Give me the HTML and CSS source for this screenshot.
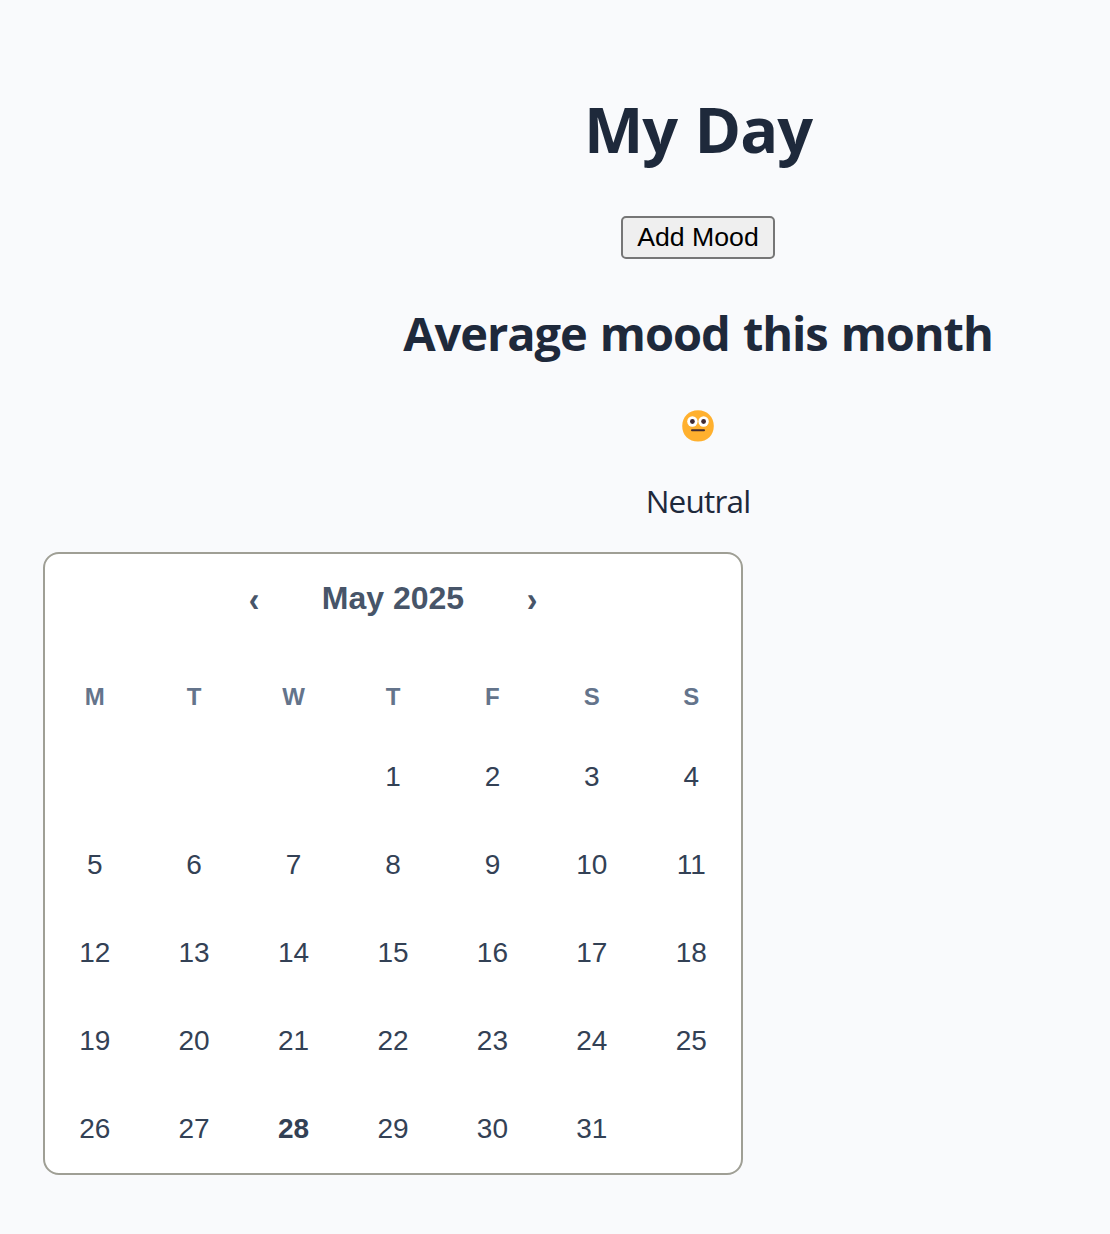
FILE: index.html
```html
<!DOCTYPE html>
<html lang="en">
<head>
<meta charset="utf-8">
<title>My Day</title>
<link rel="stylesheet" href="styles.css">
</head>
<body>
<main class="page">
  <header class="summary">
    <h1 class="title">My Day</h1>
    <button class="add-mood" type="button">Add Mood</button>
    <h2 class="subtitle">Average mood this month</h2>
    <svg class="mood-icon" viewBox="0 0 32 32" role="img" aria-label="Neutral face">
      <path d="M16 0.2C25.2 0.2 31.8 6.8 31.8 16S25.4 31.6 16 31.6 0.2 25.2 0.2 16 6.8 0.2 16 0.2Z" fill="#ffb02e"/>
      <circle cx="10.4" cy="11.5" r="5.2" fill="#fff"/>
      <circle cx="21.6" cy="11.5" r="5.2" fill="#fff"/>
      <circle cx="10.4" cy="11.5" r="2.4" fill="#402a32"/>
      <circle cx="21.6" cy="11.5" r="2.4" fill="#402a32"/>
      <path d="M10 20.3H22" stroke="#402a32" stroke-width="2" stroke-linecap="round"/>
    </svg>
    <p class="mood-label">Neutral</p>
  </header>
  <section class="calendar">
    <div class="month-bar">
      <span class="arrow">‹</span>
      <span class="month">May 2025</span>
      <span class="arrow">›</span>
    </div>
    <div class="weekdays">
      <span>M</span><span>T</span><span>W</span><span>T</span><span>F</span><span>S</span><span>S</span>
    </div>
    <div class="days">
      <span></span><span></span><span></span><span>1</span><span>2</span><span>3</span><span>4</span>
      <span>5</span><span>6</span><span>7</span><span>8</span><span>9</span><span>10</span><span>11</span>
      <span>12</span><span>13</span><span>14</span><span>15</span><span>16</span><span>17</span><span>18</span>
      <span>19</span><span>20</span><span>21</span><span>22</span><span>23</span><span>24</span><span>25</span>
      <span>26</span><span>27</span><span class="today">28</span><span>29</span><span>30</span><span>31</span><span></span>
    </div>
  </section>
</main>
</body>
</html>
```
FILE: styles.css
```css
* { box-sizing: border-box; }
html { background: #f9fafc; }
body {
  margin: 0;
  color: #1e293b;
  font-family: "Segoe UI", "Open Sans", sans-serif;
}
.page { padding: 85px 0 0 43px; }
.summary {
  display: flex;
  flex-direction: column;
  align-items: center;
  height: 467px;
  padding-left: 243px;
}
.title {
  height: 88px;
  margin: 0 0 43px;
  font-size: 63px;
  line-height: 88px;
  font-weight: 700;
  letter-spacing: -1px;
  word-spacing: 2px;
}
.add-mood {
  width: 154px;
  height: 43px;
  padding: 0 0 2px;
  border: 2px solid #767676;
  border-radius: 5px;
  background: #efefef;
  color: #000;
  font: 26.67px/36px "Liberation Sans", Arial, sans-serif;
}
.subtitle {
  height: 64px;
  margin: 42px 0 45px;
  font-size: 47px;
  line-height: 64px;
  font-weight: 700;
  letter-spacing: -1.1px;
  word-spacing: 2.2px;
}
.mood-icon { width: 32px; height: 32px; }
.mood-label {
  height: 44px;
  margin: 37px 0 0;
  font-size: 31.5px;
  line-height: 44px;
  letter-spacing: -0.8px;
}
.calendar {
  width: 700px;
  height: 623px;
  border: 2px solid #9f9f95;
  border-radius: 16px;
  background: #fff;
  color: #334155;
  font-family: "Liberation Sans", Arial, sans-serif;
}
.month-bar {
  display: flex;
  justify-content: center;
  align-items: center;
  height: 88px;
  color: #475569;
  font-size: 32px;
  font-weight: 700;
}
.month { width: 190px; text-align: center; }
.arrow { width: 88px; padding-top: 2px; text-align: center; transform: scaleY(1.1); }
.weekdays, .days {
  display: grid;
  grid-template-columns: repeat(7, 1fr);
  text-align: center;
}
.weekdays {
  height: 91px;
  padding-top: 19px;
  color: #64748b;
  font-size: 24px;
  line-height: 71px;
  font-weight: 700;
}
.days { grid-auto-rows: 88px; font-size: 28px; line-height: 88px; }
.today { font-weight: 700; }
```
